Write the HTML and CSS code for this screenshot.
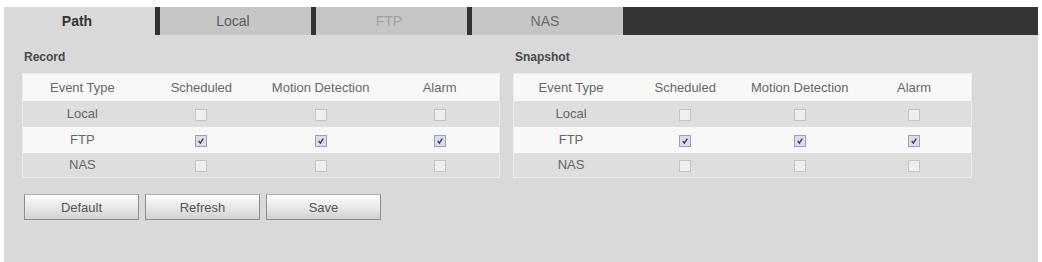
FILE: index.html
```html
<!DOCTYPE html>
<html lang="en">
<head>
    <meta charset="UTF-8">
    <title>Storage</title>
    <link rel="stylesheet" href="styles.css">
</head>
<body>
    <div class="main">
        <ul class="tabs">
            <li class="tab active">Path</li>
            <li class="tab">Local</li>
            <li class="tab faint">FTP</li>
            <li class="tab">NAS</li>
            <li class="tab-fill"></li>
        </ul>
        <div class="content">
            <div class="groups">
                <div class="group">
                    <div class="group-title">Record</div>
                    <table class="grid">
                        <tr class="head"><td>Event Type</td><td>Scheduled</td><td>Motion Detection</td><td>Alarm</td></tr>
                        <tr class="dark"><td>Local</td><td><span class="cb"></span></td><td><span class="cb"></span></td><td><span class="cb"></span></td></tr>
                        <tr><td>FTP</td>
                            <td><span class="cb on"><svg viewBox="0 0 11 11"><path d="M3 5.5 L4.8 7.8 L8 2.8"/></svg></span></td>
                            <td><span class="cb on"><svg viewBox="0 0 11 11"><path d="M3 5.5 L4.8 7.8 L8 2.8"/></svg></span></td>
                            <td><span class="cb on"><svg viewBox="0 0 11 11"><path d="M3 5.5 L4.8 7.8 L8 2.8"/></svg></span></td></tr>
                        <tr class="dark"><td>NAS</td><td><span class="cb"></span></td><td><span class="cb"></span></td><td><span class="cb"></span></td></tr>
                    </table>
                </div>
                <div class="group">
                    <div class="group-title">Snapshot</div>
                    <table class="grid">
                        <tr class="head"><td>Event Type</td><td>Scheduled</td><td>Motion Detection</td><td>Alarm</td></tr>
                        <tr class="dark"><td>Local</td><td><span class="cb"></span></td><td><span class="cb"></span></td><td><span class="cb"></span></td></tr>
                        <tr><td>FTP</td>
                            <td><span class="cb on"><svg viewBox="0 0 11 11"><path d="M3 5.5 L4.8 7.8 L8 2.8"/></svg></span></td>
                            <td><span class="cb on"><svg viewBox="0 0 11 11"><path d="M3 5.5 L4.8 7.8 L8 2.8"/></svg></span></td>
                            <td><span class="cb on"><svg viewBox="0 0 11 11"><path d="M3 5.5 L4.8 7.8 L8 2.8"/></svg></span></td></tr>
                        <tr class="dark"><td>NAS</td><td><span class="cb"></span></td><td><span class="cb"></span></td><td><span class="cb"></span></td></tr>
                    </table>
                </div>
            </div>
            <div class="buttons">
                <button class="btn">Default</button>
                <button class="btn">Refresh</button>
                <button class="btn">Save</button>
            </div>
        </div>
    </div>
</body>
</html>
```

FILE: styles.css
```css
*{
    padding:0;
    margin:0;
    box-sizing:border-box;
}
body{
    background:#fff;
    font-family:"Liberation Sans", Arial, sans-serif;
    font-size:13px;
    color:#666;
}
.main{
    width:1034px;
    height:262px;
    margin-left:4px;
    padding-top:7px;
}
.tabs{
    list-style:none;
    display:flex;
    height:28px;
}
.tab{
    width:156px;
    line-height:28px;
    font-size:14px;
    text-align:center;
    padding-right:5px;
    background:#c6c6c6;
    color:#5a5a5a;
    border-right:5px solid #333;
}
.tab.active{
    background:#d9d9d9;
    color:#333;
    font-weight:bold;
}
.tab.faint{
    color:#a0a0a0;
}
.tab:nth-child(4){
    border-right:none;
    width:151px;
    color:#6a6a6a;
}
.tab-fill{
    flex:1;
    background:#353535;
}
.content{
    background:#d9d9d9;
    height:227px;
    padding:12px 0 0 18px;
}
.groups{
    display:grid;
    grid-template-columns:478px 459px;
    column-gap:13px;
}
.group-title{
    line-height:20px;
    font-size:12px;
    font-weight:bold;
    color:#4a4a4a;
    margin-bottom:6px;
    padding-left:2px;
}
.grid{
    width:100%;
    border-collapse:collapse;
    table-layout:fixed;
    border:1px solid #ececec;
}
.grid td{
    height:26px;
    text-align:center;
    vertical-align:middle;
    color:#666;
}
.grid tr{
    background:#f8f8f8;
}
.grid tr.head td{
    height:27px;
}
.grid tr.dark{
    background:#dedede;
}
.grid tr:last-child td{
    height:25px;
}
.cb{
    display:inline-block;
    width:12px;
    height:12px;
    border:1px solid #c2c2c2;
    background:#efefef;
    vertical-align:middle;
}
.cb.on{
    background:#dcdcef;
    border-color:#a0a0b4;
}
.cb svg{
    display:block;
    width:10px;
    height:10px;
    fill:none;
    stroke:#3a3a4a;
    stroke-width:1.5;
}
.buttons{
    display:flex;
    gap:6px;
    margin-top:16px;
    padding-left:2px;
}
.btn{
    width:115px;
    height:26px;
    font-family:"Liberation Sans", Arial, sans-serif;
    font-size:13px;
    color:#555;
    border:1px solid #8e8e8e;
    border-top-color:#b0b0b0;
    background:linear-gradient(#fdfdfd, #e4e4e4 60%, #d2d2d2);
}
```
